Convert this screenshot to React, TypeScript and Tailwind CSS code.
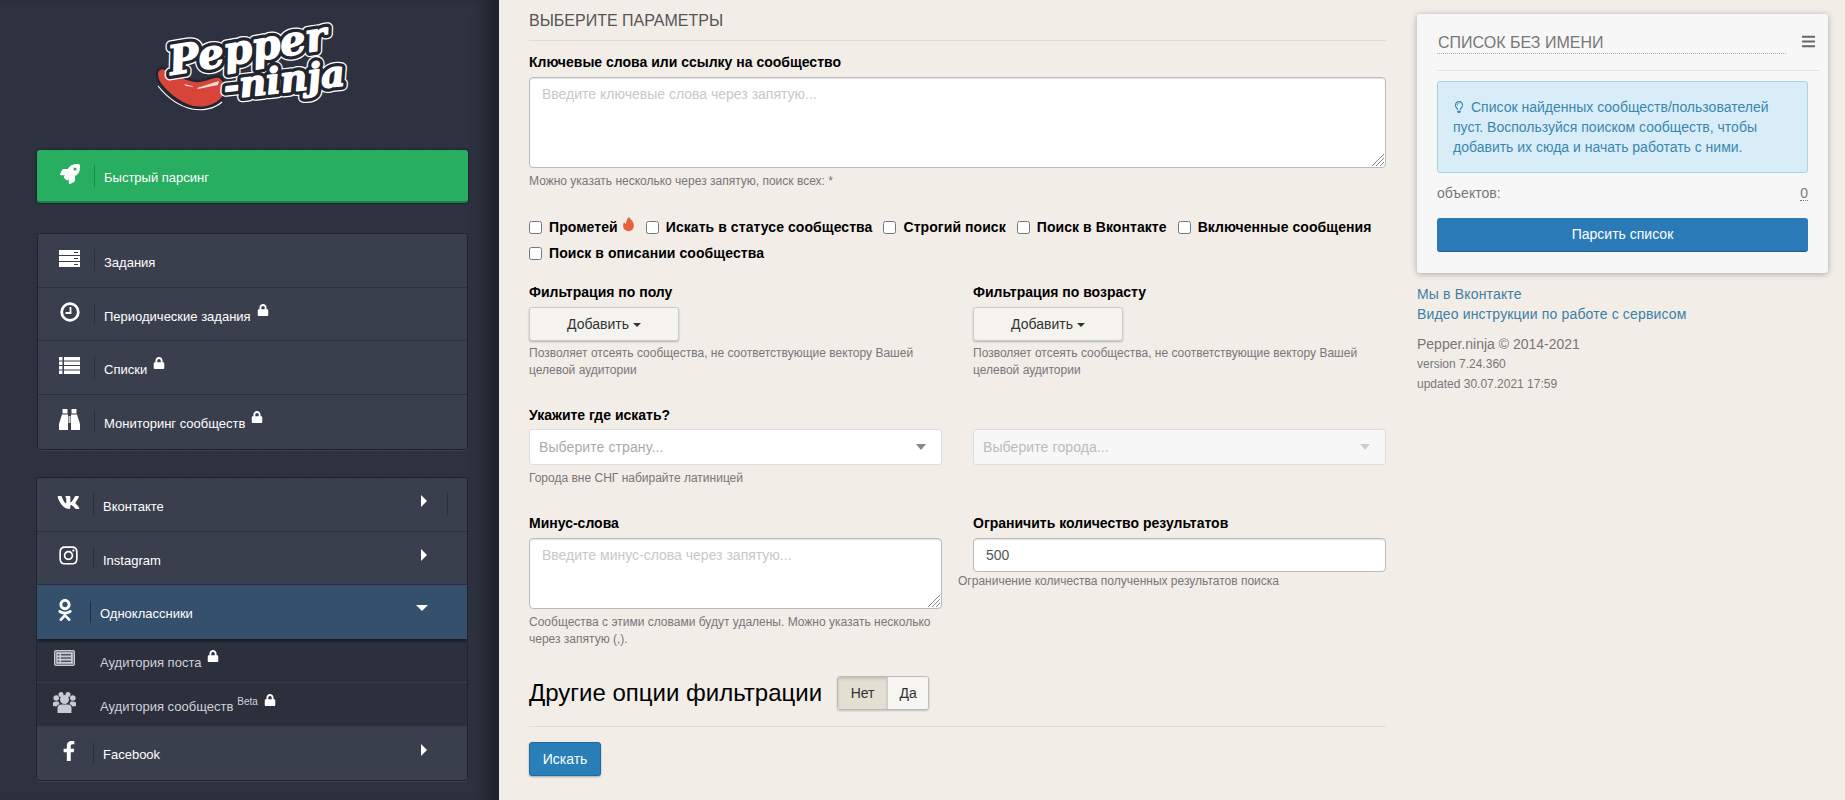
import React from 'react';
import {
  FaRocket, FaVk, FaInstagram, FaOdnoklassniki, FaFacebookF, FaLock, FaBars, FaRegLightbulb,
} from 'react-icons/fa';

const ServerIcon = () => (
  <svg width="21" height="17" viewBox="0 0 21 17" fill="currentColor">
    <path d="M0 0h21v5H0zM0 6h21v5H0zM0 12h21v5H0z" />
    <path d="M15 2h4v1h-4zM15 8h4v1h-4zM15 14h4v1h-4z" fill="#3a3f4e" />
  </svg>
);

const ClockIcon = () => (
  <svg width="20" height="20" viewBox="0 0 20 20" fill="none" stroke="currentColor">
    <circle cx="10" cy="10" r="8.3" strokeWidth="2.8" />
    <path d="M10.5 5v6H5.5" strokeWidth="1.8" />
  </svg>
);

const ListIcon = () => (
  <svg width="21" height="17" viewBox="0 0 21 17" fill="currentColor">
    <path d="M0 0h3.5v3.5H0zM5 0h16v3.5H5zM0 4.5h3.5V8H0zM5 4.5h16V8H5zM0 9h3.5v3.5H0zM5 9h16v3.5H5zM0 13.500h3.500V17H0zM5 13.500h16V17H5z" />
  </svg>
);

const BinocularsIcon = () => (
  <svg width="21" height="21" viewBox="0 0 21 21" fill="currentColor">
    <path d="M3.500 0h5v4.500h-5zM12.500 0h5v4.500h-5z" />
    <path d="M3 5.500h6V21H0v-6zM18 5.500h-6V21h9v-6z" />
    <path d="M9.500 7h2v7h-2z" fill="#cfd2d9" />
  </svg>
);

const PostIcon = () => (
  <svg width="21" height="16" viewBox="0 0 21 16">
    <rect width="21" height="16" rx="2" fill="#c8cbd2" />
    <rect x="1.800" y="1.800" width="17.400" height="12.400" fill="none" stroke="#50535f" strokeWidth="0.8" />
    <path d="M3.500 4h2v1.500h-2zM7 4h10v1.500H7zM3.500 7.200h2v1.500h-2zM7 7.200h10v1.500H7zM3.500 10.400h2v1.500h-2zM7 10.400h10v1.500H7z" fill="#50535f" />
  </svg>
);

const UsersIcon = () => (
  <svg width="23" height="21" viewBox="0 0 23 21" fill="#c8cbd2">
    <circle cx="11.500" cy="7.500" r="4.500" />
    <circle cx="8" cy="2.500" r="2.500" />
    <circle cx="15" cy="2.500" r="2.500" />
    <circle cx="3.200" cy="6" r="2.800" />
    <circle cx="19.800" cy="6" r="2.800" />
    <path d="M4.500 21v-5q0-3.500 4-3.500h6q4 0 4 3.500v5z" />
    <path d="M0 14v-3q0-1.500 3-1.500h2.500l1 2.500q-2.500 1-3 2.500zM23 14v-3q0-1.500-3-1.500h-2.500l-1 2.500q2.500 1 3 2.500z" />
  </svg>
);

const Flame = () => (
  <svg width="12" height="15" viewBox="0 0 12 15" fill="#e8603c" className="ml-[5px] mt-[-6px]">
    <path d="M6 0c1 2 3 3 4 5 1.500 3 1 6-1 8-2 1.500-5 1.500-7 0C0 11-.5 8 1 5c.5 1 1 1.500 2 2C3 4 4 2 6 0z" />
  </svg>
);

type NavProps = {
  icon: React.ReactNode;
  label: string;
  locked?: boolean;
  beta?: boolean;
  caret?: 'right' | 'down';
  tail?: boolean;
  tone?: 'normal' | 'active' | 'sub';
  last?: boolean;
  labelCls?: string;
};

const NavRow: React.FC<NavProps> = ({ icon, label, locked, beta, caret, tail, tone = 'normal', last, labelCls = 'mt-[5px]' }) => {
  const active = tone === 'active';
  const sub = tone === 'sub';
  return (
    <div
      className={`flex items-center ${sub ? 'h-[44px] bg-[#2c2f3c] text-[#cfd2d9] border-b border-[#383c4a]' : 'h-[53.5px] text-white'} ${
        active ? 'bg-[#34506d] shadow-[0_2px_3px_rgba(0,0,0,0.5)] relative' : ''
      } ${!active && !sub ? 'bg-[#3a3f4e]' : ''} ${!last && !active && !sub ? 'border-b border-[#2d313e]' : ''}`}
    >
      <span className={`flex justify-center shrink-0 mt-[-4px] ${sub ? 'w-[54px] ml-[-1px] pl-[3px]' : active ? 'w-[53px] pl-[3px]' : 'w-[56px] pl-[7px]'}`}>{icon}</span>
      <span className={`w-px h-[22px] shrink-0 ${active ? 'bg-[#1f2d3d]' : 'bg-[#2d313e]'}`} />
      <span className={`ml-[9px] text-[13px] ${labelCls}`}>{label}</span>
      {beta && <sup className="ml-[4px] text-[10px] mt-[5px]">Beta</sup>}
      {locked && <FaLock size={12} className="ml-[6px] mt-[-8px] text-white" />}
      {caret === 'right' && (
        <span className={`ml-auto flex items-center ${tail ? 'mr-[19px]' : 'mr-[40px]'}`}>
          <span className="mt-[-6px] border-y-[6px] border-l-[6px] border-y-transparent border-l-white" />
          {tail && <span className="ml-[20px] w-px h-[22px] bg-[#2d313e]" />}
        </span>
      )}
      {caret === 'down' && (
        <span className="ml-auto mr-[39px] mt-[-8px] border-x-[6px] border-t-[6px] border-x-transparent border-t-white" />
      )}
    </div>
  );
};

const logoWords = [
  { text: 'Pepper', x: 19, y: 53, size: 40, len: 160, rot: -9.5 },
  { text: '-ninja', x: 73, y: 77, size: 36, len: 122, rot: -6.5 },
];

const logoLayers = [
  { stroke: '#ffffff', width: 10.5 },
  { stroke: '#22252f', width: 8 },
  { stroke: '#ffffff', width: 1.4 },
];

const Logo: React.FC = () => (
  <svg width="200" height="92" viewBox="0 0 200 92" className="block overflow-visible">
    <path d="M9 46C18 46 30 58 44 59 54 60 62 52 68 55 75 60 75 72 69 78 62 85 50 87 40 85 26 81 14 70 8 62 4 56 3 48 9 46Z" fill="#d6443a" stroke="#22252f" strokeWidth="2.500" />
    <path d="M6 64C14 74 26 84 40 87 50 89 62 87 70 80" fill="none" stroke="#fff" strokeWidth="1.200" />
    <g fontFamily='"DejaVu Serif", "Liberation Serif", serif' fontWeight="700" fontStyle="italic" strokeLinejoin="round">
      {logoLayers.map((layer, i) => (
        <g key={i} fill="#fff" stroke={layer.stroke} strokeWidth={layer.width} aria-hidden={i < 2 ? true : undefined}>
          {logoWords.map((w) => (
            <text key={w.text} x={w.x} y={w.y} fontSize={w.size} textLength={w.len} lengthAdjust="spacingAndGlyphs" transform={`rotate(${w.rot} ${w.x} ${w.y})`}>
              {w.text}
            </text>
          ))}
        </g>
      ))}
    </g>
    <path d="M32 62l8 2 2 1-8-1zM45 66l22-7-1 4-20 4z" fill="#f8dccf" />
  </svg>
);

const Hint: React.FC<{ children: React.ReactNode; className?: string }> = ({ children, className }) => (
  <p className={`text-[12px] leading-[17px] text-[#777] ${className ?? ''}`}>{children}</p>
);

const Label: React.FC<{ children: React.ReactNode; className?: string }> = ({ children, className }) => (
  <div className={`text-[14px] leading-[20px] font-bold text-black ${className ?? ''}`}>{children}</div>
);

const Check: React.FC<{ label: string; extra?: React.ReactNode }> = ({ label, extra }) => (
  <label className="flex items-center mr-[11px] text-[14px] leading-[20px] font-bold tracking-[0.07px] text-black">
    <input type="checkbox" className="w-[13px] h-[13px] mr-[7px]" />
    {label}
    {extra}
  </label>
);

const AddButton: React.FC = () => (
  <button className="flex items-center justify-center w-[150px] h-[34px] mt-[5px] rounded-[3px] border border-[#ccc] bg-[#f5f3ee] text-[14px] text-[#333] shadow-[0_1px_2px_rgba(0,0,0,0.25)]">
    Добавить
    <span className="ml-[4px] mt-[2px] border-x-[4px] border-t-[4px] border-x-transparent border-t-[#333]" />
  </button>
);

const SelectBox: React.FC<{ text: string; disabled?: boolean }> = ({ text, disabled }) => (
  <div className={`flex items-center justify-between h-[36px] mt-[4px] px-[9px] rounded-[3px] border border-[#ddd] text-[14px] tracking-[0.1px] ${disabled ? 'bg-[#f7f7f7] text-[#bbb]' : 'bg-white text-[#aaa]'}`}>
    {text}
    <span className={`mr-[6px] border-x-[5px] border-t-[6px] border-x-transparent ${disabled ? 'border-t-[#ccc]' : 'border-t-[#888]'}`} />
  </div>
);

const inputCls =
  'block w-full rounded-[4px] border border-[#bbb] bg-white px-[12px] py-[6px] text-[14px] leading-[20px] text-[#555] placeholder:text-[#c8c8c8] shadow-[inset_0_1px_1px_rgba(0,0,0,0.12)] outline-none';

const Area: React.FC<{ placeholder: string; className: string }> = ({ placeholder, className }) => (
  <div className={`relative mt-[5px] ${className}`}>
    <textarea placeholder={placeholder} className={`${inputCls} h-full resize-none`} />
    <svg width="14" height="14" viewBox="0 0 14 14" stroke="#777" strokeWidth="0.9" className="absolute right-[1px] bottom-[1px]">
      <path d="M1 13L13 1M5 13l8-8M9 13l4-4" />
    </svg>
  </div>
);

export default function App() {
  return (
    <div className="flex h-[800px] overflow-hidden bg-[#f2ede7] font-['Liberation_Sans',Arial,sans-serif]">
      <aside className="w-[499px] shrink-0 h-full bg-[#2e3240] bg-[repeating-linear-gradient(0deg,rgba(255,255,255,0.012)_0_1px,transparent_1px_3px),repeating-linear-gradient(90deg,rgba(0,0,0,0.05)_0_1px,transparent_1px_3px)] shadow-[inset_-22px_0_18px_-10px_rgba(0,0,0,0.35)] pl-[36px] pr-[31px]">
        <div className="flex justify-center pt-[22px] h-[150px]">
          <Logo />
        </div>

        <div className="flex items-center h-[53px] ml-[1px] rounded-[3px] bg-[#27ae60] text-white border-b-2 border-[#1b7f45] shadow-[0_0_3px_rgba(0,0,0,0.6)]">
          <span className="flex justify-center w-[57px] pl-[8px] mt-[-4px]"><FaRocket size={20} /></span>
          <span className="w-px h-[22px] bg-[#1e8a4c]" />
          <span className="ml-[9px] text-[13px] mt-[4px]">Быстрый парсинг</span>
        </div>

        <div className="mt-[30px] ml-[1px] pb-[1px] rounded-[4px] bg-[#3a3f4e] border border-[#20232e] overflow-hidden shadow-[0_1px_1px_rgba(255,255,255,0.08)]">
          <NavRow icon={<ServerIcon />} label="Задания" labelCls="mt-[4px]" />
          <NavRow icon={<ClockIcon />} label="Периодические задания" locked />
          <NavRow icon={<ListIcon />} label="Списки" locked />
          <NavRow icon={<BinocularsIcon />} label="Мониторинг сообществ" locked last labelCls="mt-[4px]" />
        </div>

        <div className="mt-[27px] rounded-[4px] border border-[#20232e] overflow-hidden shadow-[0_1px_1px_rgba(255,255,255,0.08)]">
          <NavRow icon={<FaVk size={23} />} label="Вконтакте" caret="right" tail />
          <NavRow icon={<FaInstagram size={21} />} label="Instagram" caret="right" />
          <NavRow icon={<FaOdnoklassniki size={22} />} label="Одноклассники" caret="down" tone="active" labelCls="mt-[4px]" />
          <NavRow icon={<PostIcon />} label="Аудитория поста" locked tone="sub" labelCls="mt-[5px]" />
          <NavRow icon={<UsersIcon />} label="Аудитория сообществ" beta locked tone="sub" />
          <NavRow icon={<FaFacebookF size={20} />} label="Facebook" caret="right" last labelCls="mt-[3px]" />
        </div>
      </aside>

      <main className="w-[857px] ml-[30px] shrink-0">
        <div className="flex items-end h-[41px] pb-[9px] border-b border-[#e0dcd5] text-[16px] leading-[20px] text-[#555]">
          ВЫБЕРИТЕ ПАРАМЕТРЫ
        </div>
        <Label className="mt-[11px]">Ключевые слова или ссылку на сообщество</Label>
        <Area placeholder="Введите ключевые слова через запятую..." className="h-[91px]" />
        <Hint className="mt-[5px]">Можно указать несколько через запятую, поиск всех: *</Hint>

        <div className="flex flex-wrap mt-[27px] gap-y-[6px]">
          <Check label="Прометей" extra={<Flame />} />
          <Check label="Искать в статусе сообщества" />
          <Check label="Строгий поиск" />
          <Check label="Поиск в Вконтакте" />
          <Check label="Включенные сообщения" />
          <Check label="Поиск в описании сообщества" />
        </div>

        <div className="grid grid-cols-[413px_413px] gap-x-[31px] mt-[19px]">
          <div>
            <Label>Фильтрация по полу</Label>
            <AddButton />
            <Hint className="mt-[4px]">Позволяет отсеять сообщества, не соответствующие вектору Вашей целевой аудитории</Hint>
          </div>
          <div>
            <Label>Фильтрация по возрасту</Label>
            <AddButton />
            <Hint className="mt-[4px]">Позволяет отсеять сообщества, не соответствующие вектору Вашей целевой аудитории</Hint>
          </div>

          <div className="mt-[26px]">
            <Label>Укажите где искать?</Label>
            <SelectBox text="Выберите страну..." />
            <Hint className="mt-[5px]">Города вне СНГ набирайте латиницей</Hint>
          </div>
          <div className="mt-[26px] pt-[20px]">
            <SelectBox text="Выберите города..." disabled />
          </div>

          <div className="mt-[26px]">
            <Label>Минус-слова</Label>
            <Area placeholder="Введите минус-слова через запятую..." className="h-[71px]" />
            <Hint className="mt-[5px]">Сообщества с этими словами будут удалены. Можно указать несколько через запятую (,).</Hint>
          </div>
          <div className="mt-[26px]">
            <Label>Ограничить количество результатов</Label>
            <input defaultValue="500" className={`${inputCls} h-[34px] mt-[5px]`} />
            <Hint className="mt-[1px] ml-[-15px]">Ограничение количества полученных результатов поиска</Hint>
          </div>
        </div>

        <div className="flex items-center mt-[28px] pb-[16px] border-b border-[#e0dcd5]">
          <h2 className="text-[24px] leading-[34px] text-black">Другие опции фильтрации</h2>
          <div className="flex ml-[15px] h-[34px] rounded-[3px] border border-[#bbb] overflow-hidden text-[14px] text-[#333] shadow-[0_1px_2px_rgba(0,0,0,0.2)]">
            <span className="flex items-center justify-center w-[49px] bg-[#e3e0d3] shadow-[inset_0_2px_3px_rgba(0,0,0,0.15)]">Нет</span>
            <span className="flex items-center justify-center w-[41px] bg-[#f6f5f1] border-l border-[#ccc]">Да</span>
          </div>
        </div>
        <button className="block w-[72px] h-[34px] mt-[15px] rounded-[3px] bg-[#2980b9] border border-[#1f6a9c] text-white text-[14px] shadow-[0_1px_2px_rgba(0,0,0,0.3)]">
          Искать
        </button>
      </main>

      <section className="w-[411px] ml-[31px] shrink-0 pt-[14px]">
        <div className="h-[259px] rounded-[3px] bg-[#f7f7f8] pl-[20px] pr-[8px] pt-[18px] shadow-[0_1px_6px_rgba(0,0,0,0.3)]">
          <div className="flex items-start h-[39px] border-b border-[#e3e3e3]">
            <div className="w-[349px] h-[22px] pl-[1px] text-[16px] leading-[21px] text-[#777] border-b border-dotted border-[#aaa]">СПИСОК БЕЗ ИМЕНИ</div>
            <FaBars size={15} className="ml-[15px] mt-[2px] text-[#666]" />
          </div>
          <div className="w-[371px] h-[92px] mt-[10px] rounded-[3px] border border-[#a6d3e6] bg-[#d9edf8] px-[15px] pt-[15px] text-[14px] leading-[20px] text-[#3a87ad]">
            <FaRegLightbulb size={12} className="inline mr-[6px] mt-[-3px]" />
            Список найденных сообществ/пользователей пуст. Воспользуйся поиском сообществ, чтобы добавить их сюда и начать работать с ними.
          </div>
          <div className="flex justify-between w-[371px] mt-[10px] text-[14px] leading-[20px] text-[#777]">
            <span>объектов:</span>
            <span className="border-b border-dotted border-[#777] h-[18px]">0</span>
          </div>
          <button className="block w-[371px] h-[34px] mt-[15px] rounded-[3px] bg-[#2a7ab8] border-b border-[#1d5f92] text-white text-[14px]">
            Парсить список
          </button>
        </div>
        <div className="mt-[11px] text-[14px] leading-[20px] tracking-[0.16px] text-[#3c7fa8]">
          <div>Мы в Вконтакте</div>
          <div>Видео инструкции по работе с сервисом</div>
        </div>
        <div className="mt-[10px] text-[14px] leading-[20px] text-[#777]">Pepper.ninja © 2014-2021</div>
        <div className="text-[12px] leading-[20px] text-[#777]">version 7.24.360</div>
        <div className="text-[12px] leading-[20px] text-[#777]">updated 30.07.2021 17:59</div>
      </section>
    </div>
  );
}
